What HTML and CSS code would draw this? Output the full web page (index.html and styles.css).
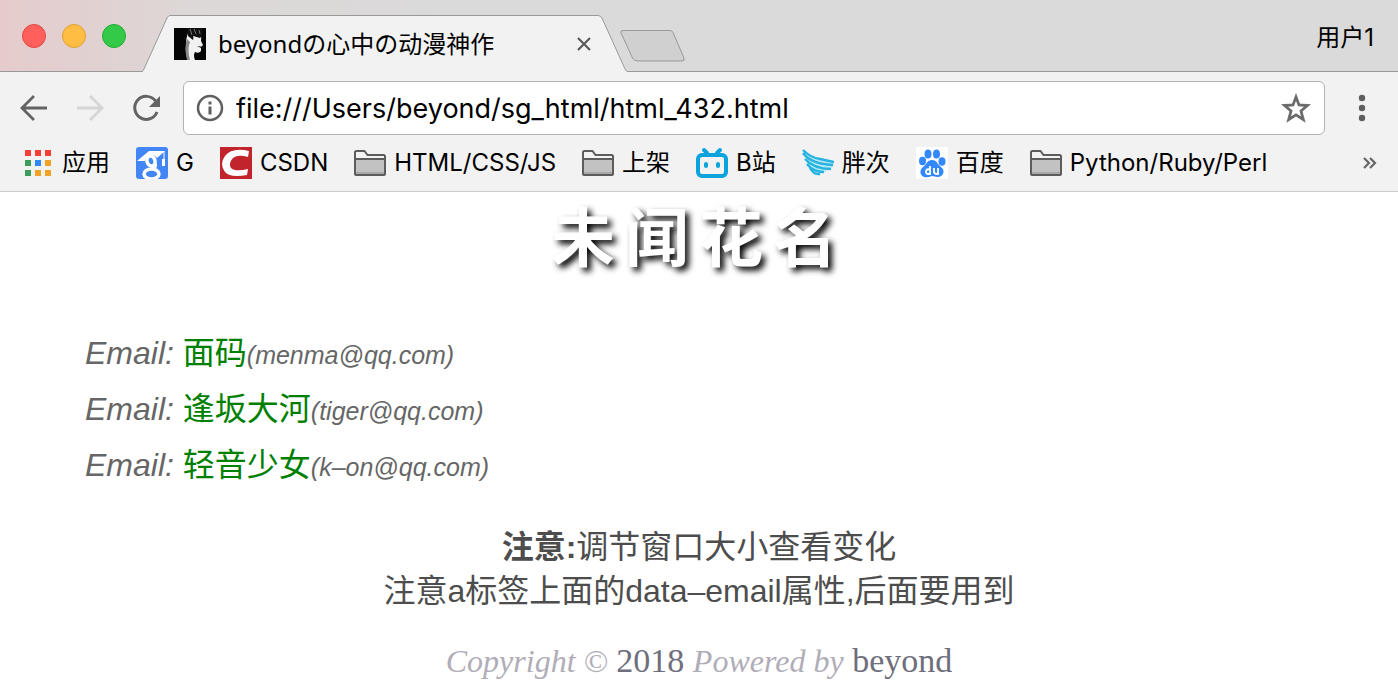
FILE: index.html
```
<!DOCTYPE html>
<html lang="zh-CN">
<head>
    <meta charset="UTF-8">
    <meta name="viewport" content="width=device-width, initial-scale=1.0">
    <title>beyondの心中の动漫神作</title>
    <link rel="stylesheet" href="styles.css">
</head>
<body>
    <svg class="defs" width="0" height="0" aria-hidden="true">
        <symbol id="folder" viewBox="0 0 32 32">
            <path d="M1 27V5.500Q1 4 2.500 4H10.500L13.500 8H29.500Q31 8 31 9.500V27Q31 28 30 28H2Q1 28 1 27Z" fill="#f3f3f3"/>
            <path d="M2 12H30V27H2Z" fill="#c2c2c2"/>
            <path d="M2 25H30V27H2Z" fill="#a9a9a9"/>
            <path d="M1 27V5.500Q1 4 2.500 4H10.500L13.500 8H29.500Q31 8 31 9.500V27Q31 28 30 28H2Q1 28 1 27ZM1 12H31" fill="none" stroke="#5c5c5c" stroke-width="2"/>
        </symbol>
    </svg>
    <header class="browser">
        <div class="titlebar">
            <div class="lights">
                <button class="light red" aria-label="关闭"></button>
                <button class="light yellow" aria-label="最小化"></button>
                <button class="light green" aria-label="全屏"></button>
            </div>
            <div class="tab">
                <svg class="tab-shape" width="486" height="57" viewBox="0 0 486 57" aria-hidden="true">
                    <path d="M0 57L1 56L25 3Q26.500 .5 28 .5H456Q458.500 .5 460 3L484 55L486 57Z" fill="#f2f2f2"/>
                    <path d="M0 56.500Q1 56 2 54L25 3Q26.500 .5 28 .5H456Q458.500 .5 460 3L483 54Q484 56.500 486 56.500" fill="none" stroke="#999"/>
                </svg>
                <svg class="favicon" viewBox="0 0 32 32" aria-hidden="true">
                    <path d="M0 0H32V32H0Z" fill="#050505"/>
                    <path d="M14 5Q20 3 26 5Q28 9 27 13L29 17L27 19V23Q25 26 21 24Q19 27 21 32H14Q11 26 12 18Q12 10 14 5Z" fill="#f1f1f1"/>
                    <path d="M13 11Q10 19 13 32H16Q13 21 16 14Z" fill="#888"/>
                    <path d="M13 0L14 8L19 12Q20 10 19 8L26 10L28 8V0ZM23 18L30 19L31 21L27 20Z" fill="#101010"/>
                    <path d="M16 1L18 7M20 1L22 6M25 2L26 6" stroke="#777" fill="none"/>
                </svg>
                <span class="tab-title">beyondの心中の动漫神作</span>
                <button class="tab-close" aria-label="关闭标签页">
                    <svg width="16" height="16" viewBox="0 0 16 16"><path d="M2 2L14 14M14 2L2 14" stroke="#5a5a5a" stroke-width="2.200"/></svg>
                </button>
            </div>
            <button class="new-tab" aria-label="新标签页">
                <svg width="66" height="32" viewBox="0 0 66 32"><path d="M3 .5H50Q52 .5 53 2.500L64 28Q65 31 62 31H18Q14 31 12.500 28L1 3Q0 .5 3 .5Z" fill="#d0d0d0" stroke="#999"/></svg>
            </button>
            <button class="user">用户1</button>
        </div>
        <div class="toolbar">
            <button class="nav-btn" aria-label="后退">
                <svg width="32" height="32" viewBox="0 0 32 32"><path d="M29 16H5M16 4L4 16L16 28" fill="none" stroke="#636363" stroke-width="2.800"/></svg>
            </button>
            <button class="nav-btn" aria-label="前进" disabled>
                <svg width="32" height="32" viewBox="0 0 32 32"><path d="M3 16H27M16 4L28 16L16 28" fill="none" stroke="#d5d5d5" stroke-width="2.800"/></svg>
            </button>
            <button class="nav-btn" aria-label="重新加载">
                <svg width="32" height="32" viewBox="0 0 32 32"><path d="M25.500 9A11.500 11.500 0 1 0 27 20" fill="none" stroke="#636363" stroke-width="3"/><path d="M30 4V15H19Z" fill="#636363"/></svg>
            </button>
            <div class="address">
                <svg width="28" height="28" viewBox="0 0 28 28" aria-hidden="true"><circle cx="14" cy="14" r="12" fill="none" stroke="#5f5f5f" stroke-width="2.500"/><path d="M12.500 7.500H15.500V10.500H12.500ZM12.500 12.500H15.500V20.500H12.500Z" fill="#5f5f5f"/></svg>
                <input type="text" aria-label="地址" value="file:///Users/beyond/sg_html/html_432.html">
                <button class="star" aria-label="收藏">
                    <svg width="30" height="30" viewBox="0 0 30 30"><path d="M15 4L18 12L26.500 12.500L20 18L22.300 26.500L15 21.800L7.700 26.500L10 18L3.500 12.500L12 12Z" fill="none" stroke="#6b6b6b" stroke-width="2.800"/></svg>
                </button>
            </div>
            <button class="menu" aria-label="菜单">
                <svg width="8" height="28" viewBox="0 0 8 28"><circle cx="4" cy="4" r="3.200" fill="#5f5f5f"/><circle cx="4" cy="14" r="3.200" fill="#5f5f5f"/><circle cx="4" cy="24" r="3.200" fill="#5f5f5f"/></svg>
            </button>
        </div>
        <nav class="bookmarks">
            <a href="#">
                <svg viewBox="0 0 32 32" aria-hidden="true"><path d="M3 3H9V9H3ZM13 3H19V9H13ZM23 3H29V9H23Z" fill="#f43e37"/><path d="M3 13H9V19H3ZM3 23H9V29H3Z" fill="#3b9d58"/><path d="M13 13H19V19H13Z" fill="#2b8af5"/><path d="M23 13H29V19H23ZM13 23H19V29H13ZM23 23H29V29H23Z" fill="#f0a323"/></svg>
                应用
            </a>
            <a href="#">
                <svg viewBox="0 0 32 32" aria-hidden="true">
                    <rect width="32" height="32" rx="3" fill="#4285f4"/>
                    <path d="M1 14L13 4H29L21 11Q19 8 15 8Q10 9 9 14Z" fill="#fff"/>
                    <path d="M28 4V13" stroke="#fff" stroke-width="1"/>
                    <path d="M26 12H29V19H26Z" fill="#fff"/>
                    <ellipse cx="15" cy="14" rx="4" ry="5" transform="rotate(-15 15 14)" fill="none" stroke="#fff" stroke-width="3.500"/>
                    <path d="M19 17Q21 20 16 21" fill="none" stroke="#fff" stroke-width="3.500"/>
                    <ellipse cx="15.500" cy="27" rx="7.500" ry="5" fill="none" stroke="#fff" stroke-width="3.500"/>
                </svg>
                G
            </a>
            <a href="#">
                <svg viewBox="0 0 32 32" aria-hidden="true"><path d="M0 0H32V32H0Z" fill="#c2242b"/><path d="M29 4L28 10Q18 7 13 11Q8 16 11 21Q15 25 28 22L27 28Q10 31 5 25Q-1 17 5 9Q12 0 29 4Z" fill="#fff"/></svg>
                CSDN
            </a>
            <a href="#"><svg aria-hidden="true"><use href="#folder"/></svg>HTML/CSS/JS</a>
            <a href="#"><svg aria-hidden="true"><use href="#folder"/></svg>上架</a>
            <a href="#">
                <svg viewBox="0 0 32 32" aria-hidden="true"><path d="M8 3L11 6M24 3L21 6" stroke="#0ba3dc" stroke-width="4" stroke-linecap="round"/><rect x="2" y="8" width="28" height="21" rx="4" fill="none" stroke="#0ba3dc" stroke-width="4"/><path d="M10 17V19M22 17V19" stroke="#0ba3dc" stroke-width="4" stroke-linecap="round"/></svg>
                B站
            </a>
            <a href="#">
                <svg viewBox="0 0 32 32" aria-hidden="true">
                    <path d="M1 3Q9 11 32 15Q31 22 24 24Q18 29 12 28Q5 20 1 3Z" fill="#b5e8f5"/>
                    <path d="M1 3Q9 11 18 12L32 15M1 6Q9 17 31 18M3 12Q12 22 29 22M5 17Q11 25 22 25M8 21Q12 28 18 27" fill="none" stroke="#27b3de" stroke-width="2.400"/>
                </svg>
                胖次
            </a>
            <a href="#">
                <svg viewBox="0 0 32 32" aria-hidden="true">
                    <path d="M0 0H32V32H0Z" fill="#fff"/>
                    <g fill="#3388ff"><ellipse cx="6.500" cy="14" rx="3.500" ry="4.200"/><ellipse cx="12" cy="7" rx="3.500" ry="4.500"/><ellipse cx="20.500" cy="7" rx="3.500" ry="4.500"/><ellipse cx="26" cy="14.500" rx="3.500" ry="4.200"/><path d="M16 13Q20 13 22 17L27 22Q29 28 23 30Q20 30 16 29Q11 31 8 30Q3 28 5 22L10 17Q12 13 16 13Z"/></g>
                    <path d="M14 19V27H12Q10 27 10 24.500Q10 22 14 22M18 21V25Q18 27 22 27V21" fill="none" stroke="#fff" stroke-width="1.800"/>
                </svg>
                百度
            </a>
            <a href="#"><svg aria-hidden="true"><use href="#folder"/></svg>Python/Ruby/Perl</a>
            <button class="more" aria-label="更多书签">
                <svg width="14" height="12" viewBox="0 0 14 12"><path d="M1 1L6 6L1 11M7 1L12 6L7 11" fill="none" stroke="#666" stroke-width="2.200"/></svg>
            </button>
        </nav>
    </header>

    <main>
        <h1>未闻花名</h1>
        <ul class="emails">
            <li><a href="mailto:menma@qq.com" data-email="menma@qq.com">面码</a></li>
            <li><a href="mailto:tiger@qq.com" data-email="tiger@qq.com">逢坂大河</a></li>
            <li><a href="mailto:k-on@qq.com" data-email="k–on@qq.com">轻音少女</a></li>
        </ul>
        <p class="note"><b>注意:</b>调节窗口大小查看变化<br>注意a标签上面的data–email属性,后面要用到</p>
    </main>
    <footer><i>Copyright ©</i> <span>2018</span> <i>Powered by</i> <span>beyond</span></footer>
</body>
</html>
```

FILE: styles.css
```
* {
    box-sizing: border-box;
}
body {
    margin: 0;
    background-color: #fff;
    font-family: "Liberation Sans", "Noto Sans CJK SC", sans-serif;
    font-size: 32px;
    color: #4d4d4d;
}
button {
    padding: 0;
    border: none;
    background: none;
    font: inherit;
    color: inherit;
}
svg {
    display: block;
    flex-shrink: 0;
}
.defs {
    position: absolute;
}

/* browser window */
.browser {
    background-color: #f2f2f2;
    border-bottom: 1px solid #ccc;
    font-family: Inter, "Noto Sans CJK SC", sans-serif;
    font-size: 24px;
    line-height: 32px;
    color: #000;
}
.titlebar {
    display: flex;
    align-items: flex-end;
    height: 72px;
    padding: 0 24px 0 22px;
    background: linear-gradient(90deg, #e6cbcc, #dcd8d7 200px, #dadada 500px);
    box-shadow: inset 0 -1px #999;
}
.lights {
    display: flex;
    gap: 16px;
    align-self: center;
    margin-right: 16px;
}
.light {
    width: 24px;
    height: 24px;
    border: 1px solid;
    border-radius: 50%;
}
.red {
    background-color: #ff605c;
    border-color: #e14640;
}
.yellow {
    background-color: #ffbd44;
    border-color: #e0a032;
}
.green {
    background-color: #33ca49;
    border-color: #1fae33;
}
.tab {
    position: relative;
    display: flex;
    align-items: center;
    width: 486px;
    height: 57px;
    padding: 0 36px 0 32px;
}
.tab-shape {
    position: absolute;
    left: 0;
    top: 0;
}
.favicon {
    position: relative;
    width: 32px;
    height: 32px;
    margin-right: 12px;
}
.tab-title {
    position: relative;
    flex: 1;
    font-family: "Noto Sans", "Noto Sans CJK SC", sans-serif;
    white-space: nowrap;
}
.tab-close {
    position: relative;
}
.new-tab {
    align-self: center;
    margin: 20px 0 0 -8px;
}
.user {
    align-self: center;
    margin-left: auto;
    padding-top: 4px;
}
.toolbar {
    display: flex;
    align-items: center;
    padding: 9px 32px 0 18px;
}
.nav-btn {
    margin-right: 24px;
}
.address {
    flex: 1;
    display: flex;
    align-items: center;
    height: 54px;
    margin: 0 33px 0 -3px;
    padding: 0 13px 0 12px;
    border: 1px solid #b3b3b3;
    border-radius: 6px;
    background-color: #fff;
}
.address input {
    flex: 1;
    min-width: 0;
    margin-left: 12px;
    padding: 0;
    border: none;
    background: none;
    font: 27px Inter, sans-serif;
}
.bookmarks {
    display: flex;
    align-items: center;
    gap: 26px;
    height: 56px;
    padding: 0 21px 0 22px;
}
.bookmarks a {
    display: flex;
    align-items: center;
    gap: 8px;
    color: #000;
    text-decoration: none;
    white-space: nowrap;
}
.bookmarks a svg {
    width: 32px;
    height: 32px;
}
.more {
    margin-left: auto;
}

/* page */
h1 {
    margin: 0;
    color: #fff;
    font-size: 64px;
    line-height: 94px;
    text-align: center;
    letter-spacing: 10px;
    text-shadow: 4px 4px 6px #000;
}
.emails {
    margin: 39px 0 0;
    padding: 0 85px;
    list-style: none;
    line-height: 56px;
}
.emails li::before {
    content: "Email: ";
    font-style: italic;
    color: #666;
}
.emails a {
    color: green;
    text-decoration: none;
}
.emails a::after {
    content: "(" attr(data-email) ")";
    font-size: 25px;
    font-style: italic;
    line-height: 1;
    color: #666;
}
.note {
    margin: 32px 0 0;
    line-height: 44px;
    text-align: center;
}
footer {
    margin-top: 28px;
    font-family: "Liberation Serif", serif;
    font-size: 34px;
    line-height: 40px;
    text-align: center;
    color: #6e6e7c;
}
footer i {
    font-size: 32px;
    color: #b0adb8;
}
```
